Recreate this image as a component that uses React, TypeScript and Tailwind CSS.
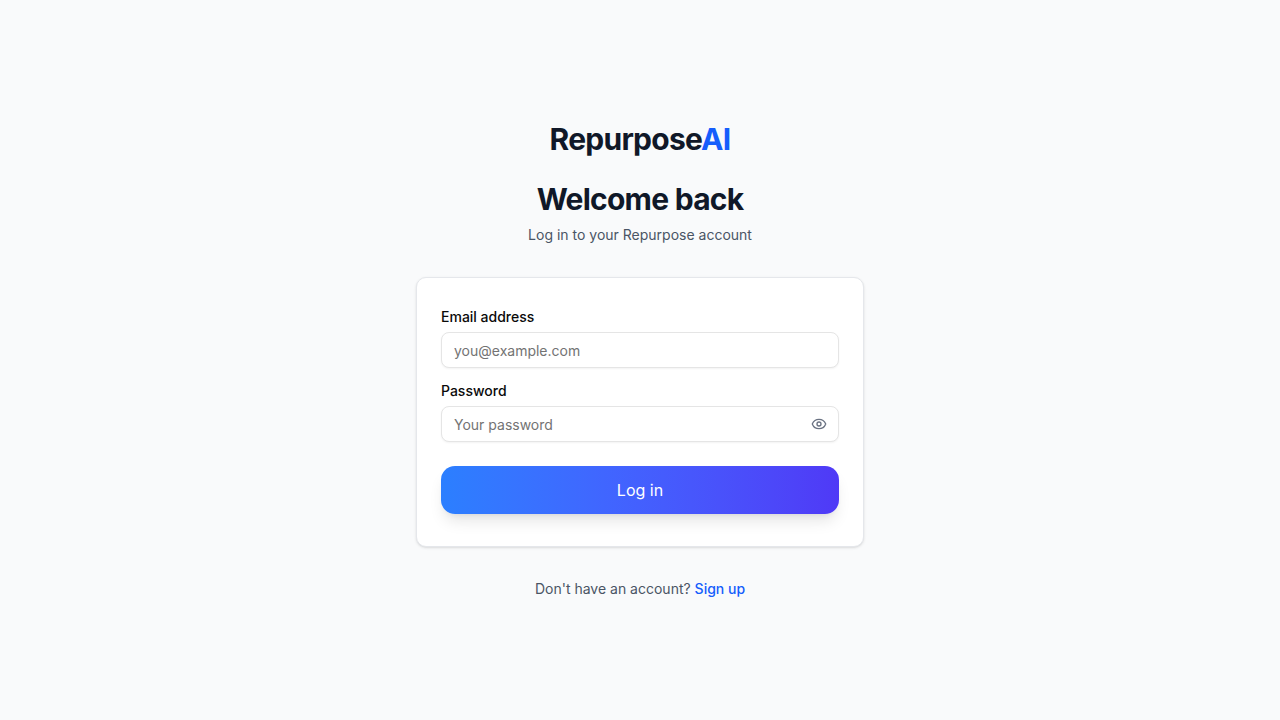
import { useState } from "react";
import { Eye, EyeOff } from "lucide-react";

const inputClass =
  "h-9 w-full rounded-lg border border-[#e5e5e5] bg-white py-1 text-sm text-[#0a0a0a] shadow-xs outline-none placeholder:text-[#737373] focus-visible:ring-3 focus-visible:ring-blue-200";

export default function App() {
  const [visible, setVisible] = useState(false);

  return (
    <div className="flex min-h-screen items-center justify-center bg-gray-50 px-4 font-['Inter',sans-serif]">
      <main className="w-full max-w-md">
        <header className="mb-8 text-center">
          <a href="#home" className="mb-6 inline-block text-3xl font-bold tracking-tight text-gray-900">
            Repurpose<span className="text-blue-600">AI</span>
          </a>
          <h1 className="text-3xl font-bold tracking-tight text-gray-900">Welcome back</h1>
          <p className="mt-2 text-sm text-gray-600">Log in to your Repurpose account</p>
        </header>

        <section className="rounded-[10px] border border-gray-200 bg-white px-6 py-8 shadow-sm">
          <form onSubmit={(event) => event.preventDefault()}>
            <div className="flex flex-col gap-2">
              <label htmlFor="email" className="text-sm leading-[14px] font-medium text-[#0a0a0a]">
                Email address
              </label>
              <input id="email" type="email" placeholder="you@example.com" className={`${inputClass} px-3`} />
            </div>
            <div className="mt-4 flex flex-col gap-2">
              <label htmlFor="password" className="text-sm leading-[14px] font-medium text-[#0a0a0a]">
                Password
              </label>
              <div className="relative">
                <input
                  id="password"
                  type={visible ? "text" : "password"}
                  placeholder="Your password"
                  className={`${inputClass} pr-10 pl-3`}
                />
                <button
                  type="button"
                  aria-label={visible ? "Hide password" : "Show password"}
                  onClick={() => setVisible(!visible)}
                  className="absolute inset-y-0 right-0 flex items-center px-3 text-gray-500"
                >
                  {visible ? <EyeOff className="size-4" /> : <Eye className="size-4" />}
                </button>
              </div>
            </div>
            <button
              type="submit"
              className="mt-6 h-12 w-full rounded-[14px] bg-linear-to-r from-blue-500 to-indigo-600 text-base text-white shadow-lg"
            >
              Log in
            </button>
          </form>
        </section>

        <p className="mt-8 text-center text-sm text-gray-600">
          Don't have an account?{" "}
          <a href="#signup" className="font-medium text-blue-600">
            Sign up
          </a>
        </p>
      </main>
    </div>
  );
}
